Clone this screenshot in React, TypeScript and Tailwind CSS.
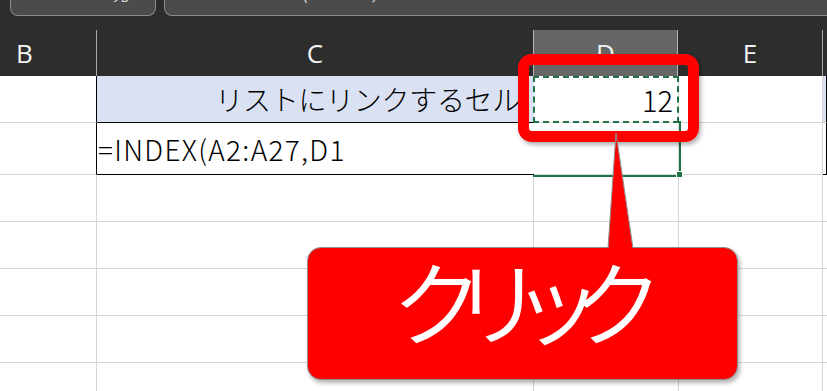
import React from 'react';

const jp = "font-['Noto_Sans_CJK_JP',sans-serif]";
const grid = 'border-[#d6d6d6]';

function PlainRow() {
  return (
    <div className="flex h-[47px] shrink-0">
      <div className={`w-[97px] border-r border-b ${grid}`} />
      <div className={`w-[437px] border-r border-b ${grid}`} />
      <div className={`w-[145px] border-r border-b ${grid}`} />
      <div className={`w-[144px] border-r border-b ${grid}`} />
      <div className={`flex-1 border-b ${grid}`} />
    </div>
  );
}

export default function App() {
  return (
    <div className={`relative w-[827px] h-[391px] overflow-hidden bg-white flex flex-col ${jp}`}>
      {/* formula bar (cut off at the top) */}
      <div className="flex items-start gap-[8px] h-[30px] shrink-0 bg-[#2d2d2d] pl-[10px]">
        <div className="w-[146px] h-[16px] overflow-hidden rounded-b-[8px] border border-t-0 border-[#8c8c8c] bg-[#4b4b4b]">
          <div className="flex items-start -mt-[19px] h-[22px] text-[20px] leading-none">
            <span className="ml-[10px] text-[#ff4040]">✕</span>
            <span className="ml-[6px] text-[#ff4040]">✕</span>
            <span className="ml-[54px] italic text-[#d8d8d8] font-['DejaVu_Serif',serif]">fy</span>
          </div>
        </div>
        <div className="flex-1 h-[16px] overflow-hidden rounded-bl-[8px] border border-t-0 border-r-0 border-[#8c8c8c] bg-[#4b4b4b]">
          <div className="-mt-[19px] ml-[136px] text-[20px] leading-none text-[#d8d8d8]">(A2:A27,D1</div>
        </div>
      </div>

      {/* column headers */}
      <div className="flex h-[46px] shrink-0 bg-[#2d2d2d] text-[26px] leading-none text-[#f2f2f2] font-['Open_Sans',sans-serif]">
        <div className="w-[97px] border-r border-[#a8a8a8] flex items-center pl-[16px]">B</div>
        <div className="w-[436px] flex items-center justify-center">C</div>
        <div className="w-[145px] bg-[#666666] border-x border-[#b4b4b4] flex items-center justify-center">D</div>
        <div className="w-[145px] border-r border-[#a8a8a8] flex items-center justify-center">E</div>
        <div className="flex-1" />
      </div>

      {/* row 1 */}
      <div className="flex h-[47px] shrink-0 text-black font-light">
        <div className={`w-[97px] border-b ${grid} border-r border-r-black`} />
        <div className="w-[437px] bg-[#d9e1f2] border-b border-black flex items-center justify-end pr-[14px] text-[28px] tracking-[-0.3px] leading-none">
          リストにリンクするセル
        </div>
        <div className={`w-[145px] border-r border-b ${grid} flex items-center justify-end pr-[5px] text-[29px] leading-none`}>
          12
        </div>
        <div className={`w-[144px] border-r border-b ${grid}`} />
        <div className={`flex-1 bg-[#d9e1f2] border-b ${grid} border-r border-r-black`} />
      </div>

      {/* row 2 */}
      <div className="flex h-[52px] shrink-0 text-black font-light">
        <div className={`w-[97px] border-b ${grid} border-r border-r-black`} />
        <div className="w-[437px] border-b border-black flex items-center pl-[1px] text-[28px] tracking-[1.3px] leading-none">
          =INDEX(A2:A27,D1
        </div>
        <div className={`w-[145px] border-r border-b ${grid}`} />
        <div className={`w-[144px] border-r border-b ${grid}`} />
        <div className="flex-1 border-b border-r border-black" />
      </div>

      <PlainRow />
      <PlainRow />
      <PlainRow />
      <PlainRow />
      <PlainRow />

      {/* copy marquee on D1 */}
      <div className="absolute left-[533px] top-[76px] w-[146px] h-[47px] border-2 border-dashed border-[#217346]" />
      {/* active cell D2 */}
      <div className="absolute left-[533px] top-[121px] w-[148px] h-[56px] border-r-2 border-b-2 border-[#217346]" />
      <div className="absolute left-[676px] top-[171px] w-[7px] h-[7px] bg-[#217346] border border-white" />

      {/* red highlight frame */}
      <div className="absolute left-[518px] top-[54px] w-[181px] h-[88px] rounded-[14px] border-[11px] border-[#ff0000] shadow-[2px_3px_4px_rgba(0,0,0,0.3)]" />

      {/* callout */}
      <div className="absolute left-[307px] top-[247px] w-[431px] h-[133px] rounded-[14px] bg-[#ff0000] border border-[#8f8f8f] shadow-[2px_3px_4px_rgba(0,0,0,0.3)] flex items-center justify-center pb-[30px] pr-[22px] text-white text-[92px] font-[350] tracking-[-32px] leading-none">
        クリック
      </div>
      <svg className="absolute left-[600px] top-[128px]" width="40" height="124" viewBox="0 0 40 124">
        <polygon points="16,5 8,122 33,122" fill="#ff0000" />
        <line x1="16" y1="5" x2="8" y2="120" stroke="#8f8f8f" strokeWidth="1" />
        <line x1="16" y1="5" x2="33" y2="120" stroke="#8f8f8f" strokeWidth="1" />
      </svg>
    </div>
  );
}
